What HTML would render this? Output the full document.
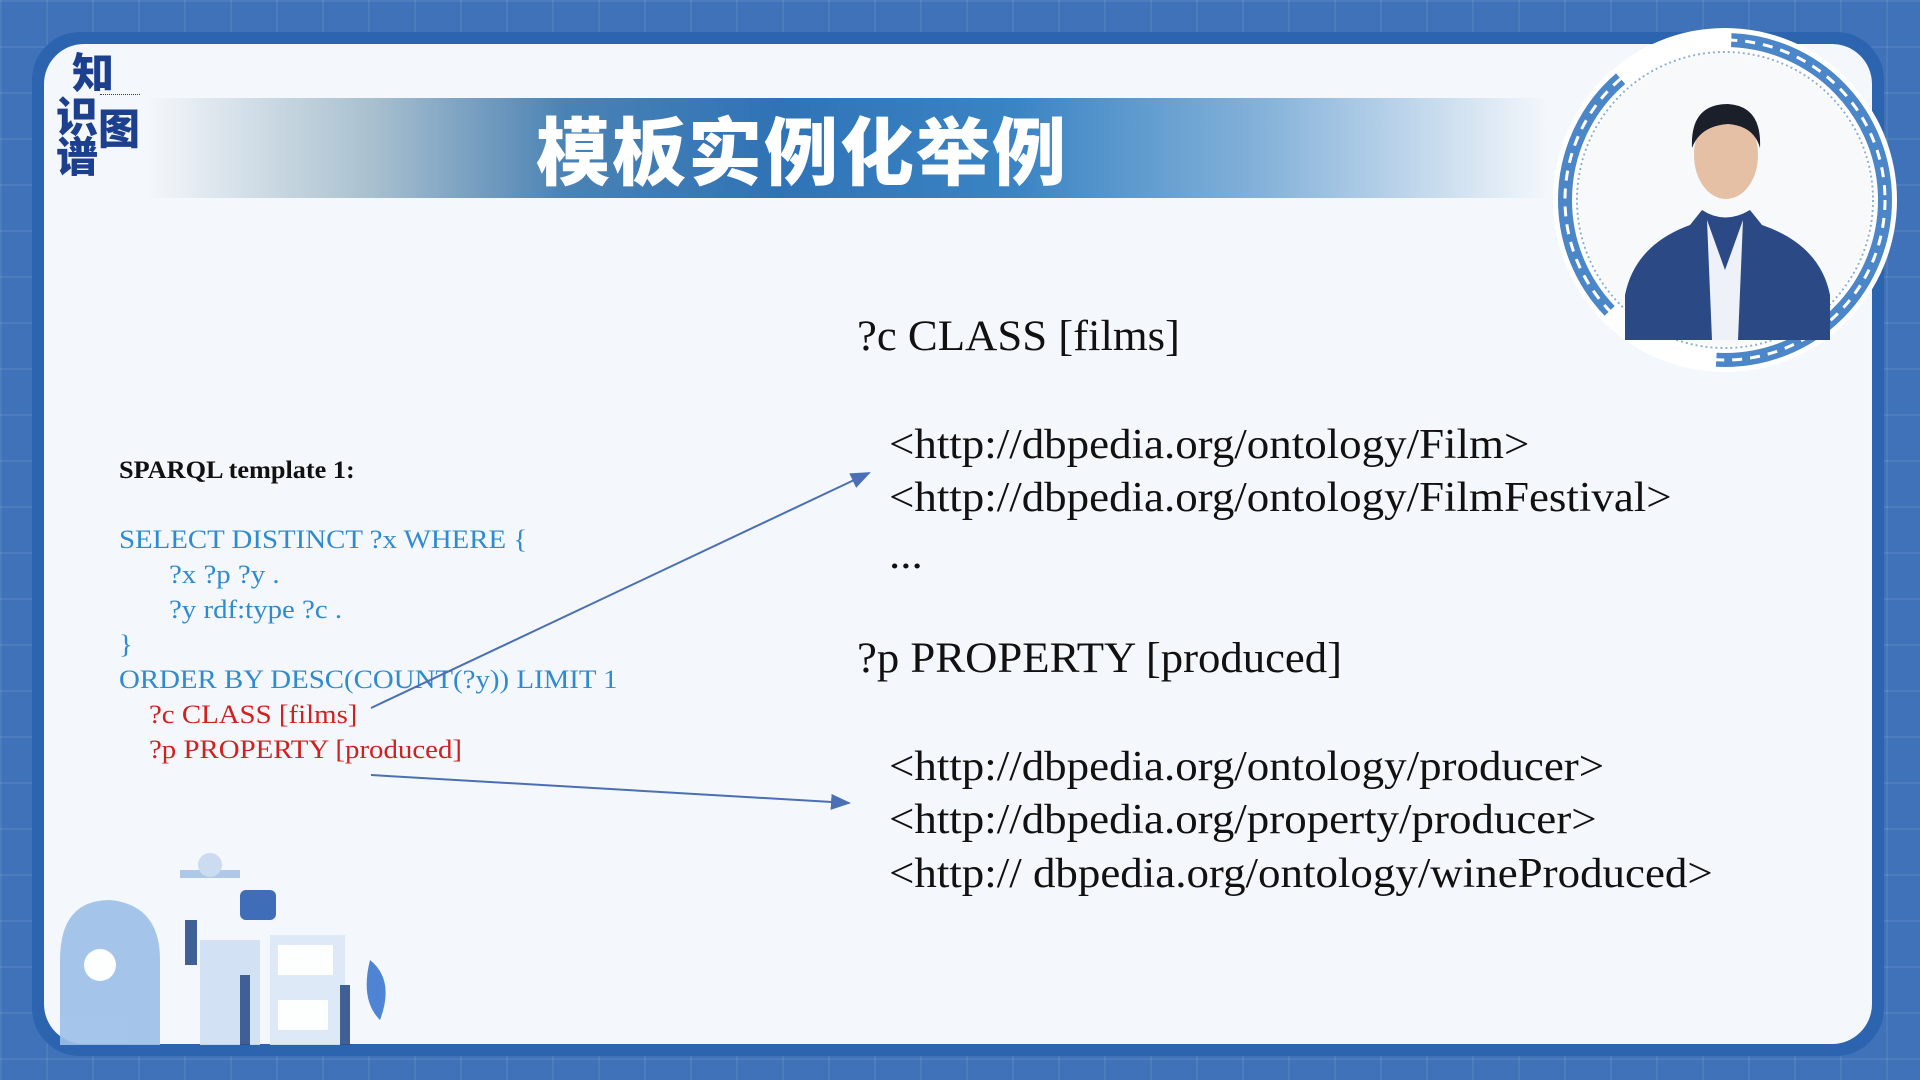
<!DOCTYPE html>
<html><head><meta charset="utf-8"><style>
*{margin:0;padding:0;box-sizing:border-box}
body{width:1920px;height:1080px;overflow:hidden;position:relative;font-family:"Liberation Serif","Noto Serif CJK SC",serif;
background:#3f72b8;
background-image:linear-gradient(rgba(255,255,255,.07) 2px,transparent 2px),linear-gradient(90deg,rgba(255,255,255,.07) 2px,transparent 2px);
background-size:46px 46px;}
.card{position:absolute;left:32px;top:32px;width:1852px;height:1024px;border-radius:48px;background:#2d64b0;}
.inner{position:absolute;left:44px;top:44px;width:1828px;height:1000px;border-radius:40px;background:#f4f7fb;overflow:hidden}
.banner{position:absolute;left:147px;top:98px;width:1400px;height:100px;
background:linear-gradient(90deg,rgba(244,247,251,1) 0%,#a9c0cf 16%,#4a82b4 30%,#2f73b6 45%,#3a84c4 62%,#86b3da 80%,rgba(244,247,251,1) 100%)}
.title{position:absolute;left:536px;top:100px;font-family:"Noto Sans CJK SC",sans-serif;font-weight:900;font-size:74px;color:#fff;letter-spacing:2px;line-height:96px}
.logo{position:absolute;font-family:"Noto Sans CJK SC",sans-serif;font-weight:900;color:#1c3f8e;font-size:42px;line-height:42px}
.t{position:absolute;white-space:nowrap;line-height:1;transform-origin:0 50%}
.l{font-size:26px;color:#2f8bd0;transform:scaleX(1.11)}
.r{font-size:26px;color:#d21f1f;transform:scaleX(1.11)}
.big{font-size:43px;color:#111;transform:scaleX(1.04)}
.url{font-size:42px;color:#111;transform:scaleX(1.07)}
</style></head><body>
<div class="card"></div>
<div class="inner"></div>
<div class="banner"></div>
<div class="title">模板实例化举例</div>
<div class="logo" style="left:72px;top:50px">知</div>
<div class="logo" style="left:56px;top:94px">识</div>
<div class="logo" style="left:98px;top:106px">图</div>
<div class="logo" style="left:56px;top:134px">谱</div>
<div style="position:absolute;left:100px;top:94px;width:40px;height:3px;border-top:1px dotted #1c3f8e"></div>

<svg style="position:absolute;left:1540px;top:20px" width="380" height="360">
<circle cx="185" cy="180" r="172" fill="#fff"/>
<circle cx="185" cy="180" r="160" fill="none" stroke="#4a86c8" stroke-width="14" stroke-dasharray="260 120"/>
<circle cx="185" cy="180" r="160" fill="none" stroke="#fff" stroke-width="3" stroke-dasharray="10 8"/>
<circle cx="185" cy="180" r="148" fill="none" stroke="#8ab0d8" stroke-width="2" stroke-dasharray="2 3"/>
<circle cx="185" cy="180" r="146" fill="#f7f9fb"/>
<path d="M85 320 L85 275 Q95 225 150 205 L162 190 Q185 205 210 190 L222 205 Q280 225 290 275 L290 320Z" fill="#2b4a85"/>
<path d="M167 200 L185 250 L203 200 L198 320 L172 320Z" fill="#eef2f8"/>
<ellipse cx="186" cy="135" rx="32" ry="44" fill="#e5c0a4"/>
<path d="M152 128 Q150 84 188 84 Q222 86 220 128 Q214 106 188 104 Q160 106 152 128Z" fill="#1b1f2a"/>
</svg>

<div class="t" style="left:119px;top:458px;font-size:25px;font-weight:bold;color:#111;transform:scaleX(1.05)">SPARQL template 1:</div>
<div class="t l" style="left:119px;top:527px">SELECT DISTINCT ?x WHERE {</div>
<div class="t l" style="left:169px;top:562px">?x ?p ?y .</div>
<div class="t l" style="left:169px;top:597px">?y rdf:type ?c .</div>
<div class="t l" style="left:119px;top:632px">}</div>
<div class="t l" style="left:119px;top:667px">ORDER BY DESC(COUNT(?y)) LIMIT 1</div>
<div class="t r" style="left:149px;top:702px">?c CLASS [films]</div>
<div class="t r" style="left:149px;top:737px">?p PROPERTY [produced]</div>

<div class="t big" style="left:857px;top:315px">?c CLASS [films]</div>
<div class="t url" style="left:889px;top:424px">&lt;http://dbpedia.org/ontology/Film&gt;</div>
<div class="t url" style="left:889px;top:477px">&lt;http://dbpedia.org/ontology/FilmFestival&gt;</div>
<div class="t url" style="left:889px;top:534px">...</div>
<div class="t big" style="left:857px;top:637px">?p PROPERTY [produced]</div>
<div class="t url" style="left:889px;top:746px">&lt;http://dbpedia.org/ontology/producer&gt;</div>
<div class="t url" style="left:889px;top:799px">&lt;http://dbpedia.org/property/producer&gt;</div>
<div class="t url" style="left:889px;top:853px">&lt;http:// dbpedia.org/ontology/wineProduced&gt;</div>

<svg style="position:absolute;left:0;top:0" width="1920" height="1080">
<defs><marker id="a" markerWidth="10" markerHeight="8" refX="9" refY="4" orient="auto"><path d="M0 0 L10 4 L0 8Z" fill="#4a6fb5"/></marker></defs>
<line x1="371" y1="708" x2="869" y2="473" stroke="#4a6fb5" stroke-width="2" marker-end="url(#a)"/>
<line x1="371" y1="775" x2="849" y2="803" stroke="#4a6fb5" stroke-width="2" marker-end="url(#a)"/>
<g opacity=".9">
<path d="M60 1045 L60 960 Q60 900 110 900 Q160 905 160 960 L160 1045Z" fill="#9cc0e8"/>
<circle cx="100" cy="965" r="16" fill="#fff"/>
<rect x="200" y="940" width="60" height="105" fill="#cfe0f4"/>
<rect x="240" y="890" width="36" height="30" rx="6" fill="#2d5fb0"/>
<rect x="270" y="935" width="75" height="110" fill="#dbe8f6"/>
<rect x="278" y="945" width="55" height="30" fill="#fff"/>
<rect x="278" y="1000" width="50" height="30" fill="#fff"/>
<rect x="180" y="870" width="60" height="8" fill="#a8c4e6"/>
<circle cx="210" cy="865" r="12" fill="#c7d9ef"/>
<path d="M370 960 Q395 980 380 1020 Q360 1000 370 960Z" fill="#3d78cf"/>
<rect x="240" y="975" width="10" height="70" fill="#2d4f8a"/>
<rect x="340" y="985" width="10" height="60" fill="#2d4f8a"/>
<rect x="185" y="920" width="12" height="45" fill="#2d4f8a"/>
</g>
</svg>
</body></html>
